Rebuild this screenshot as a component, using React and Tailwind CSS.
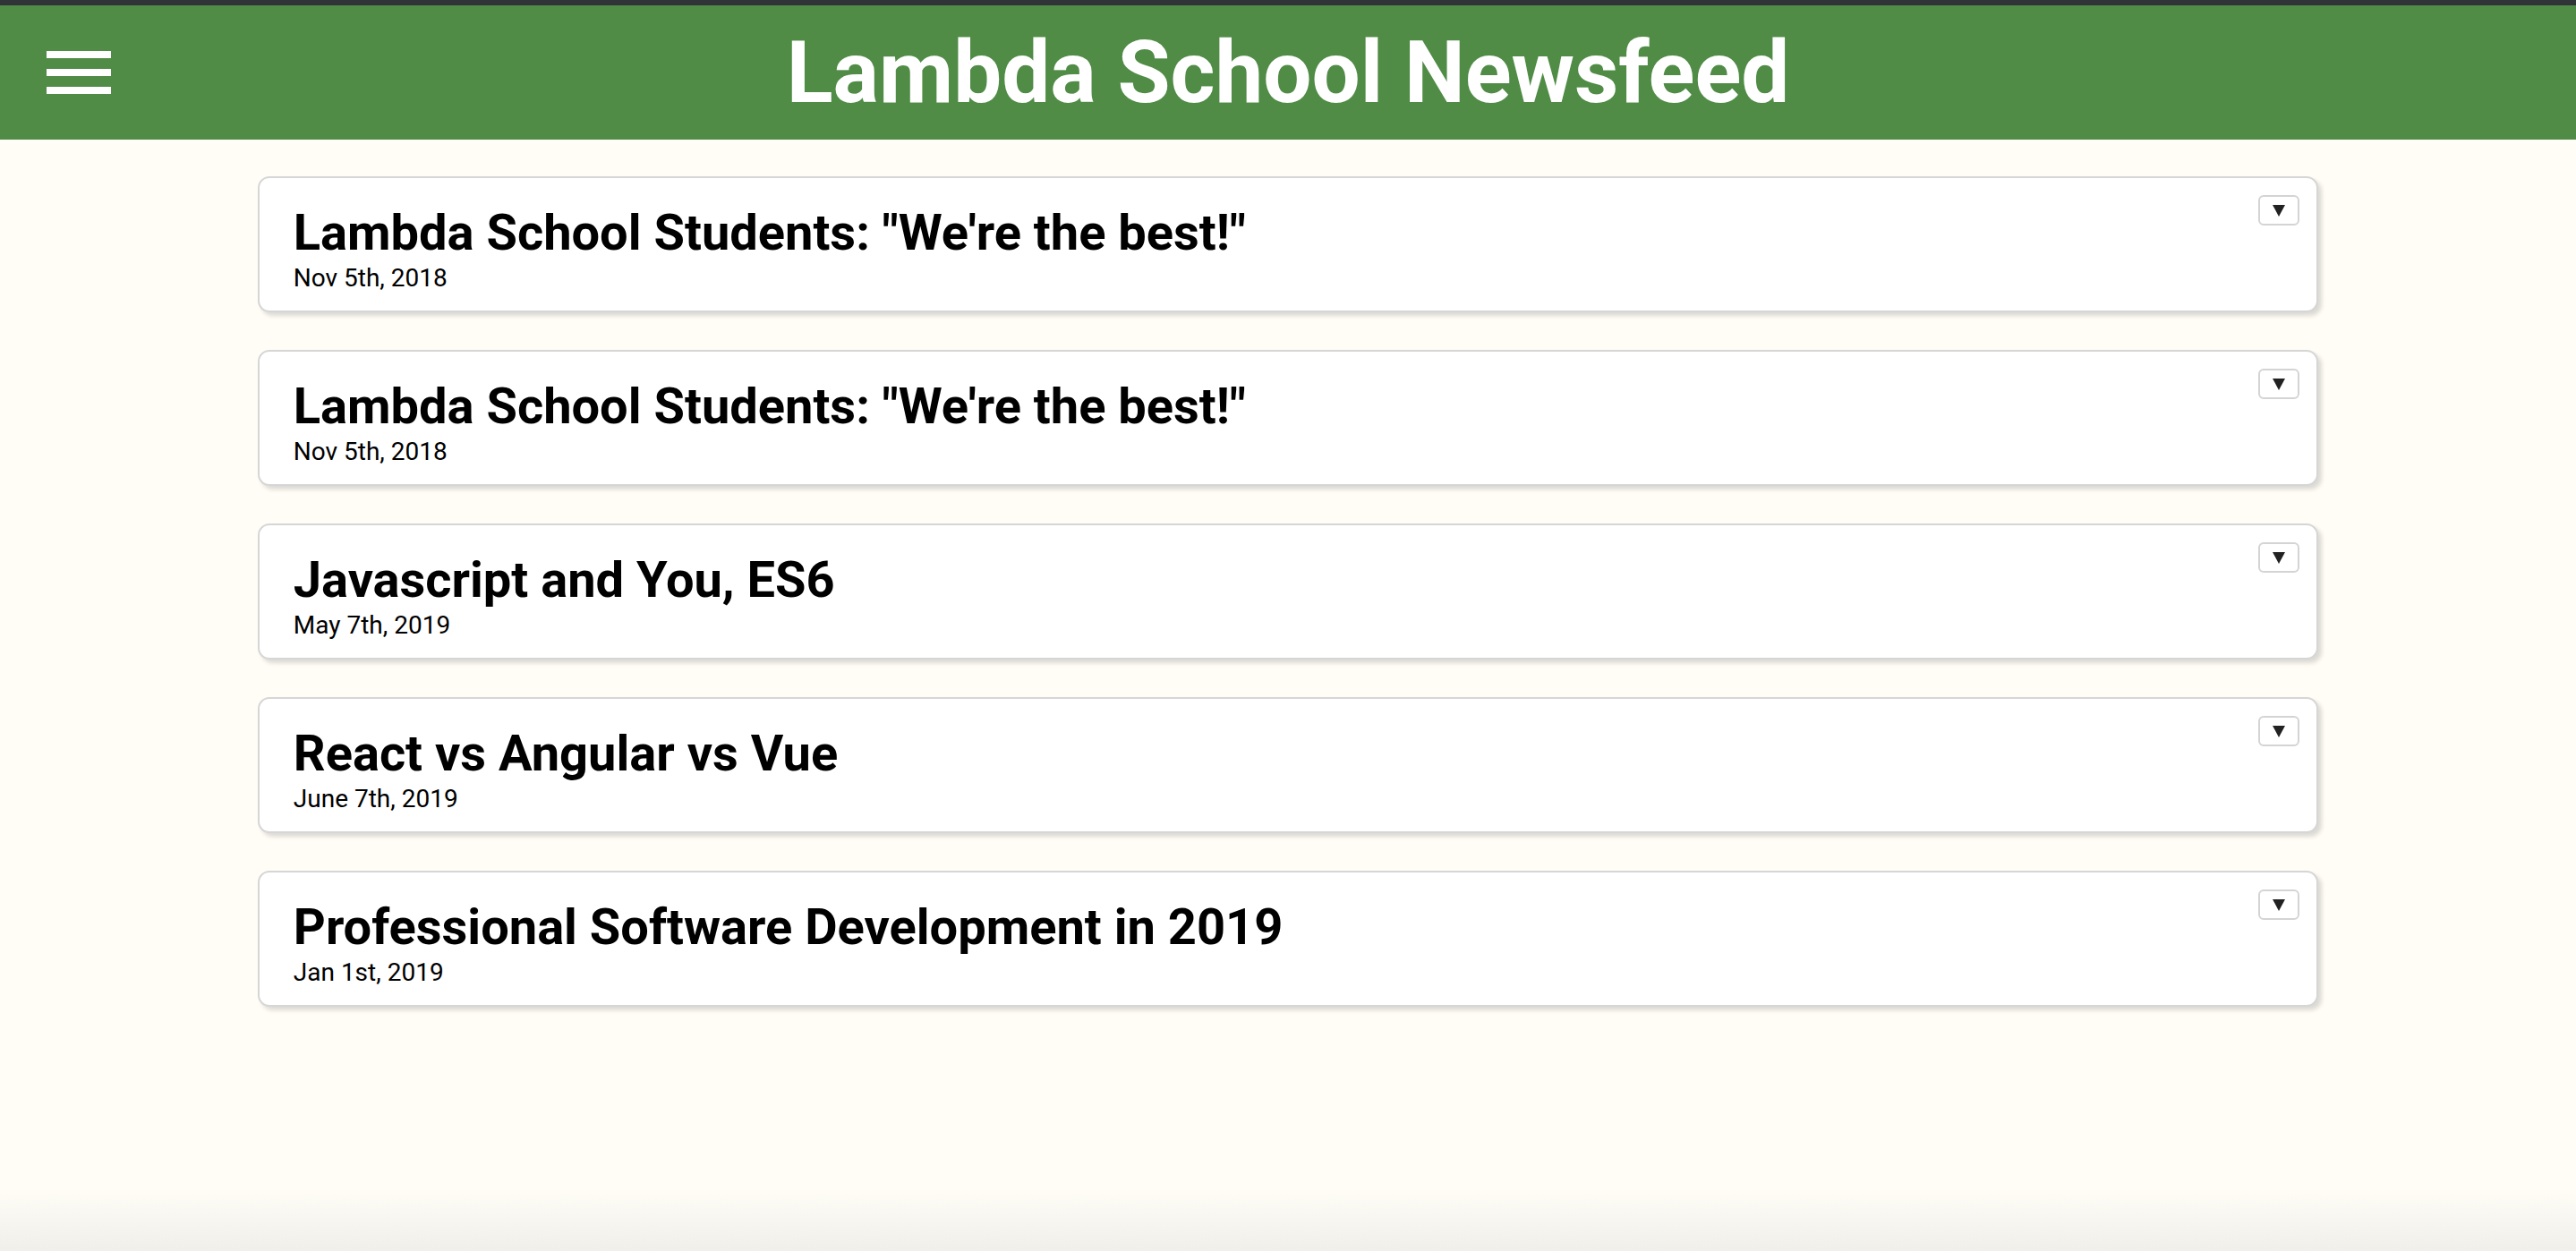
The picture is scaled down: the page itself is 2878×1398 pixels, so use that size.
import React from "react";

const articles = [
  { title: 'Lambda School Students: "We\'re the best!"', date: "Nov 5th, 2018" },
  { title: 'Lambda School Students: "We\'re the best!"', date: "Nov 5th, 2018" },
  { title: "Javascript and You, ES6", date: "May 7th, 2019" },
  { title: "React vs Angular vs Vue", date: "June 7th, 2019" },
  { title: "Professional Software Development in 2019", date: "Jan 1st, 2019" },
];

function Card({ title, date }) {
  return (
    <div className="flex justify-between items-start bg-white border-2 border-[#d6d6d6] rounded-[13px] shadow-[4px_4px_5px_rgba(0,0,0,0.14)] pl-[38px] pr-[19px] h-[152px]">
      <div className="pt-[28px]">
        <h2 className="text-[56px] leading-[66px] font-bold text-black m-0">{title}</h2>
        <p className="text-[28px] leading-[33px] mt-[1px] text-black">{date}</p>
      </div>
      <button className="mt-[19px] w-[46px] h-[34px] rounded-[6px] border-2 border-[#d4d4d4] bg-white flex items-center justify-center">
        <svg width="14" height="13" viewBox="0 0 14 13">
          <polygon points="0,0 14,0 7,13" fill="#222" />
        </svg>
      </button>
    </div>
  );
}

export default function App() {
  return (
    <div className="h-[1398px] flex flex-col bg-[#fffdf6] overflow-hidden" style={{ fontFamily: "Roboto, 'Noto Sans', sans-serif" }}>
      <div className="h-[6px] bg-[#303439]" />
      <header className="h-[150px] bg-[#508c46] grid grid-cols-[1fr_auto_1fr] items-center">
        <div className="pl-[52px] flex flex-col gap-[12px]">
          <span className="block w-[72px] h-[8px] bg-white" />
          <span className="block w-[72px] h-[8px] bg-white" />
          <span className="block w-[72px] h-[8px] bg-white" />
        </div>
        <h1 className="text-white font-bold text-[96px] leading-[112px] m-0">Lambda School Newsfeed</h1>
        <div />
      </header>
      <main className="flex-1 pt-[41px] w-[80%] mx-auto flex flex-col gap-[42px]">
        {articles.map((a, i) => (
          <Card key={i} {...a} />
        ))}
      </main>
      <div className="h-[70px] bg-gradient-to-b from-[#fffdf6] to-[#f0efea]" />
    </div>
  );
}
